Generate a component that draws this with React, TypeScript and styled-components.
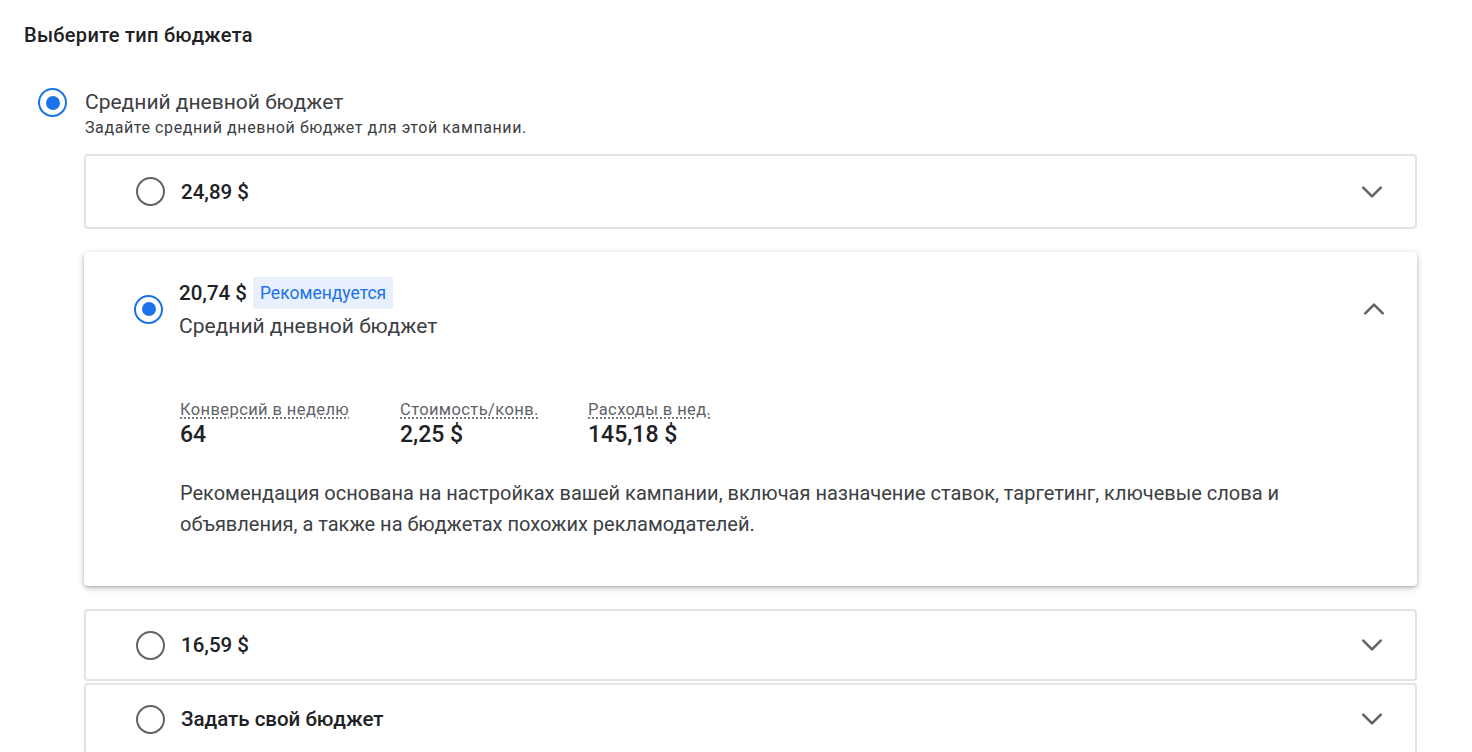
import styled, { createGlobalStyle } from "styled-components";

const Global = createGlobalStyle`
  body { margin: 0; background: #fff; font-family: Roboto, "Noto Sans", sans-serif; color: #202124; }
`;

const Page = styled.div`
  padding: 20px 55px 0 24px;
`;

const Title = styled.div`
  font-size: 20px;
  font-weight: 500;
  letter-spacing: 0.3px;
  height: 30px;
  line-height: 30px;
`;

const TypeRow = styled.div`
  display: flex;
  align-items: flex-start;
  gap: 18px;
  margin-top: 38px;
  padding-left: 14px;
`;

const Radio = styled.span<{ $on?: boolean }>`
  flex: none;
  width: 29px;
  height: 29px;
  box-sizing: border-box;
  border-radius: 50%;
  border: 2.5px solid ${(p) => (p.$on ? "#1a73e8" : "#5f6368")};
  display: flex;
  align-items: center;
  justify-content: center;
  &::after {
    content: "";
    width: 14px;
    height: 14px;
    border-radius: 50%;
    background: ${(p) => (p.$on ? "#1a73e8" : "transparent")};
  }
`;

const TypeLabel = styled.div`
  font-size: 21px;
  color: #3c4043;
  line-height: 28px;
`;

const TypeHint = styled.div`
  font-size: 16px;
  color: #3c4043;
  line-height: 24px;
  letter-spacing: 0.6px;
`;

const Options = styled.div`
  margin: 14px 0 0 60px;
  display: flex;
  flex-direction: column;
`;

const Card = styled.div<{ $open?: boolean; $gap?: number }>`
  border-radius: 4px;
  background: #fff;
  margin-top: ${(p) => p.$gap ?? 0}px;
  ${(p) =>
    p.$open
      ? "box-shadow: 0 2px 6px rgba(0,0,0,0.25), 0 1px 2px rgba(0,0,0,0.15);"
      : "border: 2px solid #e3e3e3;"}
`;

const Head = styled.div<{ $h: number }>`
  display: flex;
  align-items: center;
  height: ${(p) => p.$h}px;
  padding: 0 28px 0 50px;
  gap: 16px;
`;

const Amount = styled.div`
  font-size: 20.5px;
  font-weight: 500;
  flex: 1;
`;

const HeadText = styled.div`
  flex: 1;
  display: flex;
  flex-direction: column;
  gap: 2px;
`;

const AmountLine = styled.div`
  display: flex;
  align-items: center;
  gap: 6px;
  font-size: 20.5px;
  font-weight: 500;
`;

const Badge = styled.span`
  background: #e8f0fe;
  color: #1a73e8;
  font-size: 17.5px;
  font-weight: 400;
  padding: 6px 7px;
  border-radius: 2px;
`;

const Sub = styled.div`
  font-size: 21px;
  color: #3c4043;
  line-height: 30px;
`;

const Body = styled.div`
  padding: 44px 40px 46px 96px;
`;

const Stats = styled.div`
  display: grid;
  grid-template-columns: 220px 188px auto;
`;

const Stat = styled.div`
  display: flex;
  flex-direction: column;
  gap: 2px;
`;

const StatLabel = styled.span`
  font-size: 16.5px;
  color: #5f6368;
  letter-spacing: 0.4px;
  text-decoration: underline dotted;
  text-underline-offset: 3px;
`;

const StatValue = styled.span`
  font-size: 23px;
  font-weight: 500;
`;

const Desc = styled.p`
  margin: 30px 0 0;
  max-width: 1110px;
  font-size: 20px;
  line-height: 31px;
  color: #3c4043;
`;

const Chevron = ({ up }: { up?: boolean }) => (
  <svg width="30" height="30" viewBox="0 0 24 24" fill="none">
    <path
      d={up ? "M5 15.5l7-7 7 7" : "M5 8.5l7 7 7-7"}
      stroke="#5f6368"
      strokeWidth="2"
      strokeLinecap="round"
      strokeLinejoin="round"
    />
  </svg>
);

export default function App() {
  return (
    <Page>
      <Global />
      <Title>Выберите тип бюджета</Title>
      <TypeRow>
        <Radio $on />
        <div>
          <TypeLabel>Средний дневной бюджет</TypeLabel>
          <TypeHint>Задайте средний дневной бюджет для этой кампании.</TypeHint>
        </div>
      </TypeRow>
      <Options>
        <Card>
          <Head $h={71}>
            <Radio />
            <Amount>24,89 $</Amount>
            <Chevron />
          </Head>
        </Card>
        <Card $open $gap={23}>
          <Head $h={94} style={{ paddingTop: 10 }}>
            <Radio $on />
            <HeadText>
              <AmountLine>
                20,74 $ <Badge>Рекомендуется</Badge>
              </AmountLine>
              <Sub>Средний дневной бюджет</Sub>
            </HeadText>
            <Chevron up />
          </Head>
          <Body>
            <Stats>
              <Stat>
                <StatLabel>Конверсий в неделю</StatLabel>
                <StatValue>64</StatValue>
              </Stat>
              <Stat>
                <StatLabel>Стоимость/конв.</StatLabel>
                <StatValue>2,25 $</StatValue>
              </Stat>
              <Stat>
                <StatLabel>Расходы в нед.</StatLabel>
                <StatValue>145,18 $</StatValue>
              </Stat>
            </Stats>
            <Desc>
              Рекомендация основана на настройках вашей кампании, включая назначение ставок, таргетинг, ключевые
              слова и объявления, а также на бюджетах похожих рекламодателей.
            </Desc>
          </Body>
        </Card>
        <Card $gap={23}>
          <Head $h={68}>
            <Radio />
            <Amount>16,59 $</Amount>
            <Chevron />
          </Head>
        </Card>
        <Card $gap={2}>
          <Head $h={68}>
            <Radio />
            <Amount>Задать свой бюджет</Amount>
            <Chevron />
          </Head>
        </Card>
      </Options>
    </Page>
  );
}
